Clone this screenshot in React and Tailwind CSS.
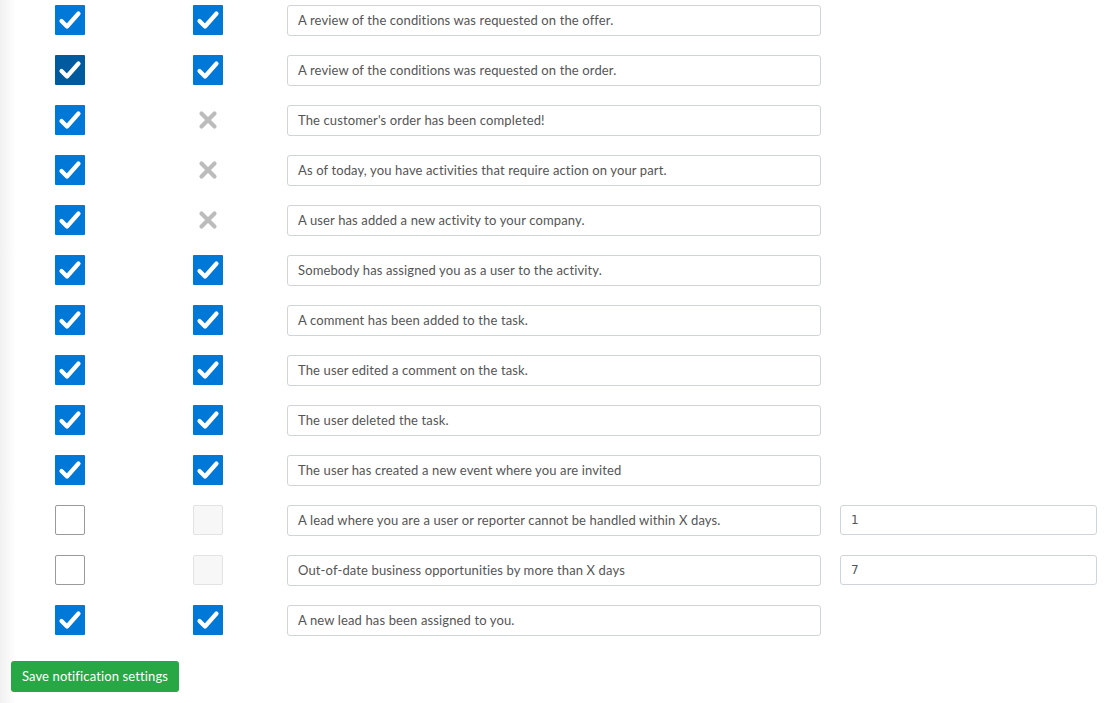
const ROWS = [
  { a: 'on', b: 'on', text: 'A review of the conditions was requested on the offer.' },
  { a: 'focus', b: 'on', text: 'A review of the conditions was requested on the order.' },
  { a: 'on', b: 'x', text: "The customer's order has been completed!" },
  { a: 'on', b: 'x', text: 'As of today, you have activities that require action on your part.' },
  { a: 'on', b: 'x', text: 'A user has added a new activity to your company.' },
  { a: 'on', b: 'on', text: 'Somebody has assigned you as a user to the activity.' },
  { a: 'on', b: 'on', text: 'A comment has been added to the task.' },
  { a: 'on', b: 'on', text: 'The user edited a comment on the task.' },
  { a: 'on', b: 'on', text: 'The user deleted the task.' },
  { a: 'on', b: 'on', text: 'The user has created a new event where you are invited' },
  { a: 'off', b: 'disabled', text: 'A lead where you are a user or reporter cannot be handled within X days.', days: '1' },
  { a: 'off', b: 'disabled', text: 'Out-of-date business opportunities by more than X days', days: '7' },
  { a: 'on', b: 'on', text: 'A new lead has been assigned to you.' },
];

function Check({ state }) {
  if (state === 'x') {
    return (
      <div className="w-[30px] h-[30px] flex items-center justify-center">
        <svg width="20" height="20" viewBox="0 0 20 20">
          <path d="M3.5 3.5 L16.5 16.5 M16.5 3.5 L3.5 16.5" stroke="#bcbcbc" strokeWidth="4.2" strokeLinecap="round" fill="none" />
        </svg>
      </div>
    );
  }
  if (state === 'off') {
    return <div className="w-[30px] h-[30px] rounded-[2px] border border-[#9a9a9a] bg-white" />;
  }
  if (state === 'disabled') {
    return <div className="w-[30px] h-[30px] rounded-[2px] border border-[#e3e3e3] bg-[#f7f7f7]" />;
  }
  return (
    <div className={`w-[30px] h-[30px] rounded-[1px] flex items-center justify-center ${state === 'focus' ? 'bg-[#005a9e]' : 'bg-[#0078d7]'}`}>
      <svg width="30" height="30" viewBox="0 0 30 30">
        <path d="M6.5 16 L12 21.5 L23.5 8.5" stroke="#fff" strokeWidth="4.2" strokeLinecap="round" strokeLinejoin="round" fill="none" />
      </svg>
    </div>
  );
}

export default function App() {
  return (
    <div className="min-h-[703px] w-full bg-[linear-gradient(to_right,#f1f1f1,#ffffff_16px)] pt-[5px] font-['Lato','Open_Sans',sans-serif] tracking-[0.13px]">
      <div className="flex flex-col gap-[19px]">
        {ROWS.map((r, i) => (
          <div key={i} className="flex items-start pl-[55px] h-[31px]">
            <Check state={r.a} />
            <div className="ml-[108px]"><Check state={r.b} /></div>
            <div className="ml-[64px] w-[534px] h-[31px] border border-[#cfd4da] rounded-[3px] px-[10px] flex items-center text-[13px] text-[#555]">
              {r.text}
            </div>
            {r.days && (
              <div className="ml-[19px] w-[257px] h-[30px] border border-[#cfd4da] rounded-[3px] px-[10px] flex items-center text-[12px] text-[#555] tracking-normal font-['DejaVu_Sans',sans-serif]">
                {r.days}
              </div>
            )}
          </div>
        ))}
      </div>
      <div className="pl-[11px] mt-[25px] pb-[11px]">
        <button className="w-[168px] h-[31px] bg-[#28a745] rounded-[3px] text-white text-[13px] flex items-center justify-center">
          Save notification settings
        </button>
      </div>
    </div>
  );
}
